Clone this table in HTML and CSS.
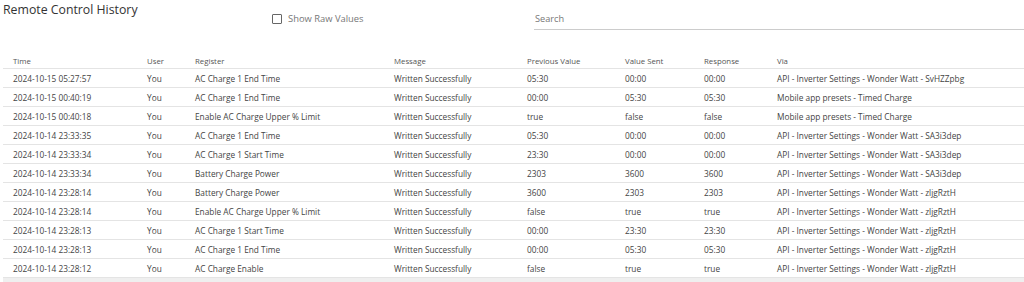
FILE: index.html
```html
<!DOCTYPE html>
<html lang="en">
<head>
    <meta charset="UTF-8">
    <title>Remote Control History</title>
    <link rel="stylesheet" href="styles.css">
</head>
<body>
    <div class="history">
        <div class="toolbar">
            <h1 class="title">Remote Control History</h1>
            <label class="raw-toggle">
                <span class="checkbox"></span>
                <span>Show Raw Values</span>
            </label>
            <div class="search">
                <input type="text" placeholder="Search">
            </div>
        </div>

        <table class="history-table">
            <colgroup>
                <col style="width: 134px">
                <col style="width: 48px">
                <col style="width: 199px">
                <col style="width: 133px">
                <col style="width: 98px">
                <col style="width: 79px">
                <col style="width: 73px">
                <col style="width: 257px">
            </colgroup>
            <thead>
                <tr>
                    <th>Time</th>
                    <th>User</th>
                    <th>Register</th>
                    <th>Message</th>
                    <th>Previous Value</th>
                    <th>Value Sent</th>
                    <th>Response</th>
                    <th>Via</th>
                </tr>
            </thead>
            <tbody>
                <tr><td>2024-10-15 05:27:57</td><td>You</td><td>AC Charge 1 End Time</td><td>Written Successfully</td><td>05:30</td><td>00:00</td><td>00:00</td><td>API - Inverter Settings - Wonder Watt - SvHZZpbg</td></tr>
                <tr><td>2024-10-15 00:40:19</td><td>You</td><td>AC Charge 1 End Time</td><td>Written Successfully</td><td>00:00</td><td>05:30</td><td>05:30</td><td>Mobile app presets - Timed Charge</td></tr>
                <tr><td>2024-10-15 00:40:18</td><td>You</td><td>Enable AC Charge Upper % Limit</td><td>Written Successfully</td><td>true</td><td>false</td><td>false</td><td>Mobile app presets - Timed Charge</td></tr>
                <tr><td>2024-10-14 23:33:35</td><td>You</td><td>AC Charge 1 End Time</td><td>Written Successfully</td><td>05:30</td><td>00:00</td><td>00:00</td><td>API - Inverter Settings - Wonder Watt - SA3i3dep</td></tr>
                <tr><td>2024-10-14 23:33:34</td><td>You</td><td>AC Charge 1 Start Time</td><td>Written Successfully</td><td>23:30</td><td>00:00</td><td>00:00</td><td>API - Inverter Settings - Wonder Watt - SA3i3dep</td></tr>
                <tr><td>2024-10-14 23:33:34</td><td>You</td><td>Battery Charge Power</td><td>Written Successfully</td><td>2303</td><td>3600</td><td>3600</td><td>API - Inverter Settings - Wonder Watt - SA3i3dep</td></tr>
                <tr><td>2024-10-14 23:28:14</td><td>You</td><td>Battery Charge Power</td><td>Written Successfully</td><td>3600</td><td>2303</td><td>2303</td><td>API - Inverter Settings - Wonder Watt - zljgRztH</td></tr>
                <tr><td>2024-10-14 23:28:14</td><td>You</td><td>Enable AC Charge Upper % Limit</td><td>Written Successfully</td><td>false</td><td>true</td><td>true</td><td>API - Inverter Settings - Wonder Watt - zljgRztH</td></tr>
                <tr><td>2024-10-14 23:28:13</td><td>You</td><td>AC Charge 1 Start Time</td><td>Written Successfully</td><td>00:00</td><td>23:30</td><td>23:30</td><td>API - Inverter Settings - Wonder Watt - zljgRztH</td></tr>
                <tr><td>2024-10-14 23:28:13</td><td>You</td><td>AC Charge 1 End Time</td><td>Written Successfully</td><td>00:00</td><td>05:30</td><td>05:30</td><td>API - Inverter Settings - Wonder Watt - zljgRztH</td></tr>
                <tr><td>2024-10-14 23:28:12</td><td>You</td><td>AC Charge Enable</td><td>Written Successfully</td><td>false</td><td>true</td><td>true</td><td>API - Inverter Settings - Wonder Watt - zljgRztH</td></tr>
            </tbody>
        </table>
        <div class="table-footer"></div>
    </div>
</body>
</html>
```

FILE: styles.css
```css
body {
    margin: 0;
    padding: 0;
    font-family: "Open Sans", "Liberation Sans", sans-serif;
    color: #444;
    background: #fff;
    overflow: hidden;
}
.history {
    padding-left: 3px;
}
.toolbar {
    display: flex;
    align-items: flex-start;
    height: 53px;
}
.title {
    margin: 0;
    width: 269px;
    padding-top: 1px;
    font-size: 12.3px;
    font-weight: 400;
    line-height: 17px;
    color: #333;
}
.raw-toggle {
    display: flex;
    align-items: center;
    gap: 6px;
    width: 262px;
    margin-top: 12px;
    font-size: 9.4px;
    color: #777;
}
.checkbox {
    width: 8px;
    height: 8px;
    border: 1.2px solid #666;
    border-radius: 1px;
}
.search {
    flex: 1;
    margin-top: 9px;
}
.search input {
    display: block;
    width: 100%;
    box-sizing: border-box;
    margin: 0;
    border: none;
    border-bottom: 1px solid #ccc;
    padding: 3px 0 4px 1px;
    font-family: inherit;
    font-size: 9.2px;
    color: #444;
    outline: none;
}
.search input::placeholder {
    color: #777;
}
.history-table {
    width: 1021px;
    table-layout: fixed;
    border-collapse: collapse;
    font-size: 8.3px;
}
.history-table th {
    text-align: left;
    font-weight: 400;
    font-size: 7.8px;
    color: #555;
    height: 15px;
    padding: 0 0 0 10px;
    border-bottom: 1px solid #e4e4e4;
    white-space: nowrap;
}
.history-table td {
    height: 18px;
    padding: 0 0 0 10px;
    border-bottom: 1px solid #e4e4e4;
    white-space: nowrap;
    color: #444;
}
.table-footer {
    height: 6px;
    background: #efefef;
}
```
